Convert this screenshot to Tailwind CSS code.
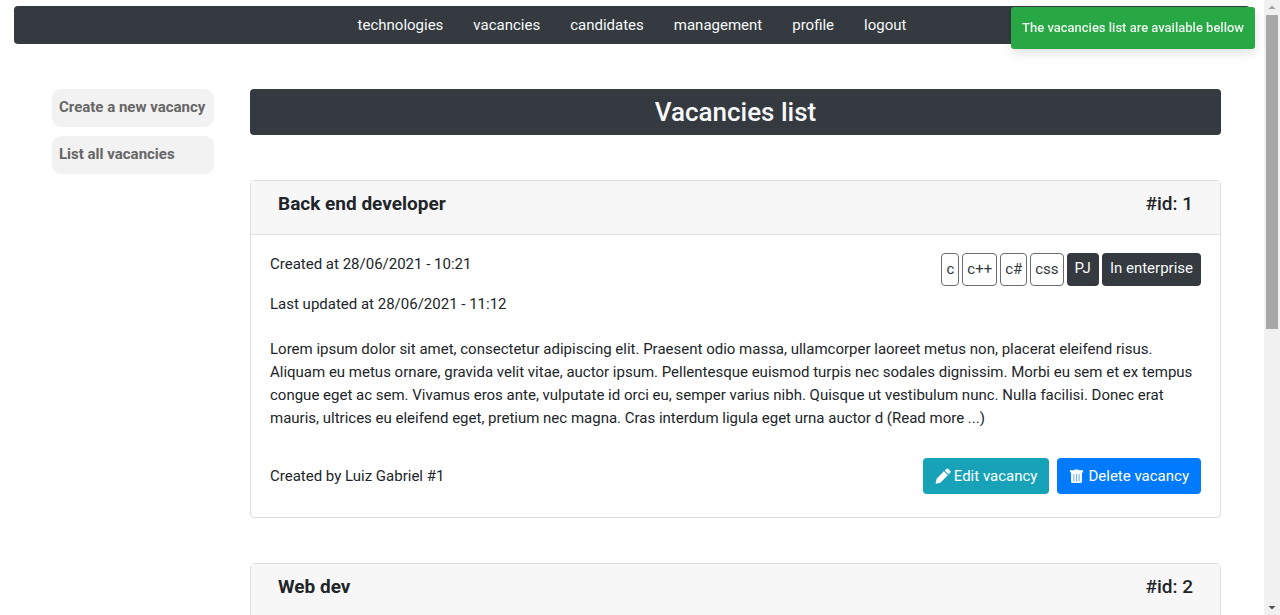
<!DOCTYPE html>
<html lang="en">
<head>
<meta charset="utf-8">
<meta name="viewport" content="width=device-width, initial-scale=1">
<title>Vacancies list</title>
<script src="https://cdn.jsdelivr.net/npm/@tailwindcss/browser@4"></script>
</head>
<body class="flex h-screen overflow-hidden bg-white font-['Roboto',sans-serif] text-[15px] leading-[23px] text-[#212529]">
  <div class="min-w-0 flex-1 overflow-hidden px-[14px] pt-[6px]">
    <nav class="flex h-[38px] items-center justify-center gap-[30px] rounded bg-[#343a40] text-[#f8f9fa]" aria-label="Main">
      <a href="#technologies">technologies</a>
      <a href="#vacancies">vacancies</a>
      <a href="#candidates">candidates</a>
      <a href="#management">management</a>
      <a href="#profile">profile</a>
      <a href="#logout">logout</a>
    </nav>

    <div class="mt-[45px] flex items-start gap-9 pr-[29px] pl-[38px]">
      <aside class="flex w-[162px] shrink-0 flex-col gap-[9px] font-bold text-[#666666]">
        <a href="#create" class="rounded-[9px] bg-[#f2f2f2] px-[7px] pt-[7px] pb-2 whitespace-nowrap">Create a new vacancy</a>
        <a href="#list" class="rounded-[9px] bg-[#f2f2f2] px-[7px] pt-[7px] pb-2 whitespace-nowrap">List all vacancies</a>
      </aside>

      <main class="min-w-0 flex-1">
        <h1 class="rounded bg-[#343a40] py-2 text-center text-[26px] leading-[30px] font-medium text-[#f8f9fa]">Vacancies list</h1>

        <article class="mt-[45px] rounded border border-[#dfdfdf]">
          <header class="flex h-[54px] justify-between border-b border-[#dfdfdf] bg-[#f7f7f7] px-[27px] pt-[11px] text-[19px]">
            <h2 class="font-bold">Back end developer</h2>
            <span class="font-medium">#id: 1</span>
          </header>
          <div class="px-[19px] pt-[18px] pb-[23px]">
            <div class="flex items-start justify-between">
              <div class="flex flex-col gap-[17px]">
                <p>Created at 28/06/2021 - 10:21</p>
                <p>Last updated at 28/06/2021 - 11:12</p>
              </div>
              <ul class="flex gap-[3px]">
                <li class="rounded border border-[#6a6e73] px-1 py-1 text-[#343a40]">c</li>
                <li class="rounded border border-[#6a6e73] px-1 py-1 text-[#343a40]">c++</li>
                <li class="rounded border border-[#6a6e73] px-1 py-1 text-[#343a40]">c#</li>
                <li class="rounded border border-[#6a6e73] px-1 py-1 text-[#343a40]">css</li>
                <li class="rounded bg-[#343a40] px-2 py-1 text-[#f8f9fa]">PJ</li>
                <li class="rounded bg-[#343a40] px-2 py-1 text-[#f8f9fa]">In enterprise</li>
              </ul>
            </div>
            <p class="mt-[22px]">Lorem ipsum dolor sit amet, consectetur adipiscing elit. Praesent odio massa, ullamcorper laoreet metus non, placerat eleifend risus. Aliquam eu metus ornare, gravida velit vitae, auctor ipsum. Pellentesque euismod turpis nec sodales dignissim. Morbi eu sem et ex tempus congue eget ac sem. Vivamus eros ante, vulputate id orci eu, semper varius nibh. Quisque ut vestibulum nunc. Nulla facilisi. Donec erat mauris, ultrices eu eleifend eget, pretium nec magna. Cras interdum ligula eget urna auctor d (Read more ...)</p>
            <div class="mt-7 flex items-center justify-between">
              <p>Created by Luiz Gabriel #1</p>
              <div class="flex gap-2 text-white">
                <button type="button" class="flex h-9 items-center gap-[3px] rounded bg-[#17a2b8] px-3">
                  <svg class="size-4" viewBox="0 0 16 16" fill="currentColor" aria-hidden="true"><path d="M11.3.9a1.5 1.5 0 0 1 2.1 0l1.8 1.8a1.5 1.5 0 0 1 0 2.1l-1.6 1.6-3.9-3.9zM8.9 3.3l3.9 3.9-7.2 7.2-1.2.5-3.9.8.9-3.8.4-1.3z"/></svg>
                  Edit vacancy
                </button>
                <button type="button" class="flex h-9 items-center gap-1 rounded bg-[#007bff] px-3">
                  <svg class="size-[15px]" viewBox="0 0 16 16" fill="currentColor" aria-hidden="true"><path d="M1 1.4h4.3L6 .4h4l.7 1H15v2.4H1zM2.2 3.8h11.6v9.6q0 1.6-1.6 1.6H3.8q-1.6 0-1.6-1.6z"/><path d="M5.2 5.2v8M8 5.2v8M10.8 5.2v8" stroke="#5caaff" stroke-width="1"/></svg>
                  Delete vacancy
                </button>
              </div>
            </div>
          </div>
        </article>

        <article class="mt-[45px] rounded border border-[#dfdfdf]">
          <header class="flex h-[54px] justify-between border-b border-[#dfdfdf] bg-[#f7f7f7] px-[27px] pt-[11px] text-[19px]">
            <h2 class="font-bold">Web dev</h2>
            <span class="font-medium">#id: 2</span>
          </header>
        </article>
      </main>
    </div>
  </div>

  <div class="flex w-4 shrink-0 flex-col items-center justify-between bg-[#f1f1f1]" aria-hidden="true">
    <div class="flex h-full w-full flex-col items-center">
      <svg class="h-[15px] w-3 shrink-0" viewBox="0 0 12 15"><path fill="#a3a3a3" d="M6 5.5 9.5 9h-7z"/></svg>
      <div class="h-[52.4%] w-3 bg-[#a8a8a8]"></div>
    </div>
    <svg class="h-[15px] w-3 shrink-0" viewBox="0 0 12 15"><path fill="#505050" d="M2.5 6h7L6 9.5z"/></svg>
  </div>

  <div role="status" class="fixed top-[7px] right-[25px] rounded-[3px] bg-[#28a745] px-[11px] py-[10px] text-[13px] leading-[22px] font-medium text-white/90 shadow-[0_4px_11px_rgba(0,0,0,0.12)]">The vacancies list are available bellow</div>
</body>
</html>
